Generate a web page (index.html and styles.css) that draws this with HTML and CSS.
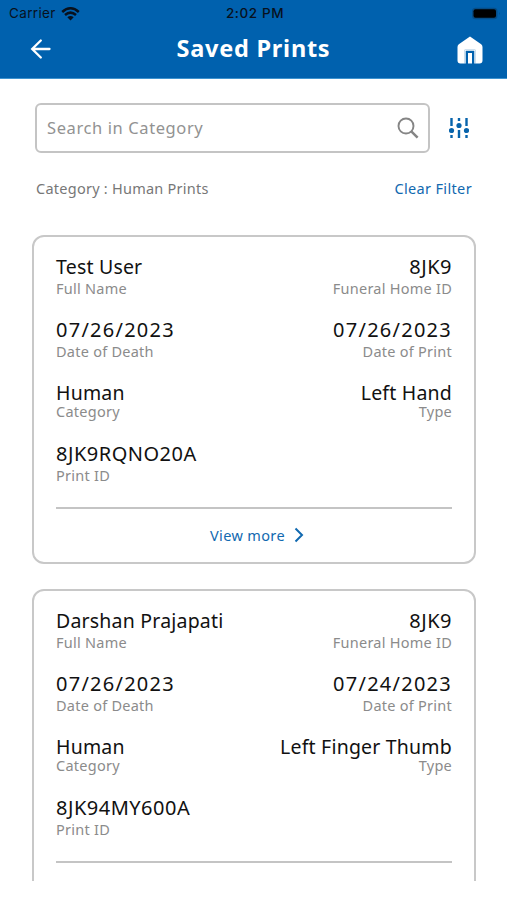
FILE: index.html
```html
<!DOCTYPE html>
<html lang="en">
<head>
<meta charset="utf-8">
<title>Saved Prints</title>
<link rel="stylesheet" href="styles.css">
</head>
<body>
<header class="header">
  <div class="status">
    <div class="carrier">Carrier
      <svg class="wifi" width="19" height="14" viewBox="0 0 19 14"><path d="M1.2 5Q9.5-2.4 17.8 5M4 8Q9.5 3.2 15 8" fill="none" stroke="#08111d" stroke-width="2.5"/><path d="M6.3 10.3Q9.5 7.7 12.7 10.3L9.5 13.5Z" fill="#08111d"/></svg>
    </div>
    <div class="time">2:02 PM</div>
    <svg class="battery" width="30" height="13" viewBox="0 0 30 13"><rect x="1" y=".8" width="25.500" height="11.400" rx="3.500" fill="#064d87"/><rect x="2.500" y="2.200" width="22.500" height="8.600" rx="2" fill="#000"/><path d="M28 5v3q1.500-1.500 0-3" fill="#064d87"/></svg>
  </div>
  <div class="bar">
    <svg class="back" width="22" height="22" viewBox="0 0 22 22"><path d="M19.500 11H2.500M10.800 2.500L2.200 11L10.800 19.500" fill="none" stroke="#fff" stroke-width="2.300" stroke-linecap="round"/></svg>
    <h1 class="title">Saved Prints</h1>
    <svg class="home" width="26" height="28" viewBox="0 0 26 28"><path d="M13 .5L24.200 8.300Q25.500 9.300 25.500 11V24.500Q25.500 27.500 22.500 27.500H18.300V13.800H7.700V27.500H3.500Q.5 27.500 .5 24.500V11Q.5 9.300 1.800 8.300Z" fill="#fff"/><path d="M9 27.500V14.800H17V27.500H15.800V16.300H10.200V27.500Z" fill="#0061ae"/><path d="M7.700 13.800H18.300V27.500H17.300V14.800H8.700V27.500H7.700Z" fill="#fff"/><path d="M11 27.500V17H15V27.500Z" fill="#fff"/></svg>
  </div>
</header>
<main class="content">
  <div class="search-row">
    <div class="search"><span class="placeholder">Search in Category</span>
      <svg width="22" height="22" viewBox="0 0 22 22"><circle cx="9" cy="9" r="7.500" fill="none" stroke="#858585" stroke-width="1.900"/><path d="M14.300 14.300L20.600 20.600" stroke="#858585" stroke-width="2.500"/></svg>
    </div>
    <svg class="sliders" width="20" height="20" viewBox="0 0 20 20"><path d="M2.500 0V8M2.500 17V20M10 0V3M10 12V20M17.500 0V8M17.500 17V20" stroke="#0864ac" stroke-width="2.400"/><g fill="#0864ac"><circle cx="2.500" cy="12.500" r="2.600"/><circle cx="10" cy="7.500" r="2.600"/><circle cx="17.500" cy="12.500" r="2.600"/></g></svg>
  </div>
  <div class="filter"><span>Category : Human Prints</span><a class="clear">Clear Filter</a></div>
  <section class="list">
    <article class="card">
      <div class="row"><div><p class="value">Test User</p><p class="label">Full Name</p></div><div class="end"><p class="value code">8JK9</p><p class="label">Funeral Home ID</p></div></div>
      <div class="row"><div><p class="value date">07/26/2023</p><p class="label">Date of Death</p></div><div class="end"><p class="value date">07/26/2023</p><p class="label">Date of Print</p></div></div>
      <div class="row tight"><div><p class="value">Human</p><p class="label">Category</p></div><div class="end"><p class="value">Left Hand</p><p class="label">Type</p></div></div>
      <div class="row"><div><p class="value code">8JK9RQNO20A</p><p class="label">Print ID</p></div></div>
      <div class="more"><span>View more</span><svg width="10" height="16" viewBox="0 0 10 16"><path d="M1.500 1.500L8 8L1.500 14.500" fill="none" stroke="#1169b0" stroke-width="2"/></svg></div>
    </article>
    <article class="card">
      <div class="row"><div><p class="value">Darshan Prajapati</p><p class="label">Full Name</p></div><div class="end"><p class="value code">8JK9</p><p class="label">Funeral Home ID</p></div></div>
      <div class="row"><div><p class="value date">07/26/2023</p><p class="label">Date of Death</p></div><div class="end"><p class="value date">07/24/2023</p><p class="label">Date of Print</p></div></div>
      <div class="row tight"><div><p class="value">Human</p><p class="label">Category</p></div><div class="end"><p class="value">Left Finger Thumb</p><p class="label">Type</p></div></div>
      <div class="row"><div><p class="value code">8JK94MY600A</p><p class="label">Print ID</p></div></div>
      <div class="more"></div>
    </article>
  </section>
</main>
</body>
</html>
```
FILE: styles.css
```css
* { box-sizing: border-box; }
body { margin: 0; height: 900px; overflow: hidden; background: #fff; font-family: "Noto Sans", sans-serif; color: #111; }
p, h1 { margin: 0; }
svg { display: block; flex: none; }
.header { height: 79px; background: #0061ae; border-bottom: 1px solid #3d93d0; }
.status { height: 27px; display: grid; grid-template-columns: 1fr auto 1fr; align-items: center; padding: 0 6px 0 9px; font: 13.5px/27px Inter, sans-serif; color: #08111d; }
.carrier { display: flex; gap: 5px; align-items: center; letter-spacing: .35px; }
.time { font-weight: 500; letter-spacing: .6px; }
.battery { justify-self: end; }
.bar { height: 44px; display: grid; grid-template-columns: 1fr auto 1fr; align-items: center; padding: 0 24px 0 30px; }
.title { margin: -3px 6px 0 0; font-size: 23.5px; line-height: 40px; font-weight: 700; color: #fff; letter-spacing: .75px; }
.home { justify-self: end; margin-top: 1px; }
.search-row { display: flex; align-items: center; padding: 24px 38px 0 35px; justify-content: space-between; }
.search { width: 395px; height: 50px; border: 2px solid #c4c4c4; border-radius: 6px; display: flex; align-items: center; justify-content: space-between; padding: 0 9px 0 10px; }
.placeholder { margin-top: -1px; font-size: 16.5px; line-height: 24px; color: #929292; letter-spacing: .6px; }
.filter { display: flex; justify-content: space-between; padding: 25px 35px 0 36px; font-size: 14.5px; line-height: 20px; letter-spacing: .25px; color: #777; }
.clear { color: #1169b0; letter-spacing: .35px; }
.list { height: 646px; margin: 37px 31px 0 32px; overflow: hidden; }
.card { height: 329px; margin-bottom: 25px; border: 2px solid #c8c8c8; border-radius: 12px; padding: 19px 22px 0; }
.row { display: flex; justify-content: space-between; height: 63px; }
.row.tight { height: 61px; }
.end { text-align: right; }
.value { font-size: 19.5px; line-height: 22px; letter-spacing: .2px; }
.value.date { font-size: 20px; letter-spacing: 1.25px; }
.value.code { font-size: 20px; letter-spacing: .5px; }
.label { margin-top: 3px; font-size: 14.5px; line-height: 14px; letter-spacing: .25px; color: #8b8b8b; }
.tight .label { margin-top: 0; }
.more { display: flex; justify-content: center; align-items: center; gap: 9px; margin: 1px 0 0; padding: 0 0 2px 6px; height: 55px; border-top: 2px solid #c4c4c4; font-size: 14.5px; letter-spacing: .35px; color: #1169b0; }
```
